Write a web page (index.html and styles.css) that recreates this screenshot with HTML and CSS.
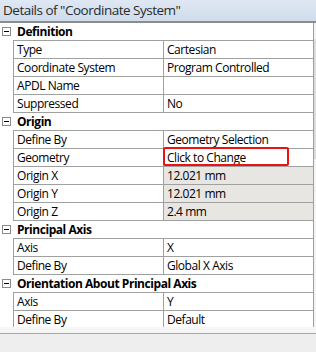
FILE: index.html
```html
<!DOCTYPE html>
<html>
<head>
  <title>Details of "Coordinate System"</title>
  <link rel="stylesheet" href="styles.css">
</head>
<body>
  <div class="panel">
    <div class="title">Details of "Coordinate System"</div>

    <div class="body">
      <div class="grid">
        <div class="group"><span class="toggle"></span><span class="group-label">Definition</span></div>
        <div class="prop"><span class="name">Type</span><span class="value">Cartesian</span></div>
        <div class="prop"><span class="name">Coordinate System</span><span class="value">Program Controlled</span></div>
        <div class="prop"><span class="name">APDL Name</span><span class="value"></span></div>
        <div class="prop"><span class="name">Suppressed</span><span class="value">No</span></div>

        <div class="group"><span class="toggle"></span><span class="group-label">Origin</span></div>
        <div class="prop"><span class="name">Define By</span><span class="value">Geometry Selection</span></div>
        <div class="prop"><span class="name">Geometry</span><span class="value">Click to Change</span></div>
        <div class="prop"><span class="name">Origin X</span><span class="value readonly">12.021 mm</span></div>
        <div class="prop"><span class="name">Origin Y</span><span class="value readonly">12.021 mm</span></div>
        <div class="prop"><span class="name">Origin Z</span><span class="value readonly">2.4 mm</span></div>

        <div class="group"><span class="toggle"></span><span class="group-label">Principal Axis</span></div>
        <div class="prop"><span class="name">Axis</span><span class="value">X</span></div>
        <div class="prop"><span class="name">Define By</span><span class="value">Global X Axis</span></div>

        <div class="group"><span class="toggle"></span><span class="group-label">Orientation About Principal Axis</span></div>
        <div class="prop"><span class="name">Axis</span><span class="value">Y</span></div>
        <div class="prop"><span class="name">Define By</span><span class="value">Default</span></div>
      </div>
      <div class="scroll"><div class="thumb"></div></div>
    </div>

    <div class="footer"></div>

    <!-- red marker around the geometry field -->
    <div class="highlight"></div>
  </div>
</body>
</html>
```

FILE: styles.css
```css
body {
  margin: 0;
  font-family: "Open Sans", "Noto Sans", sans-serif;
  font-size: 12px;
  letter-spacing: -0.45px;
  color: #000;
  background: #f0f0f0;
}

.panel {
  position: relative;
  width: 316px;
  height: 352px;
  display: flex;
  flex-direction: column;
  overflow: hidden;
}

.title {
  height: 21px;
  line-height: 21px;
  padding-left: 3px;
  font-size: 13.5px;
  letter-spacing: -0.5px;
  color: #2b2b2b;
  background: linear-gradient(#dfe8f3, #cfdcec);
  border-bottom: 2px solid #8c8c8c;
  white-space: nowrap;
}

.body {
  display: flex;
  height: 304px;
  overflow: hidden;
  background: #fff;
}

.grid {
  width: 314px;
}

.prop {
  display: flex;
  height: 18px;
  padding-left: 13px;
}

.name,
.value {
  box-sizing: border-box;
  height: 18px;
  line-height: 17px;
  padding-left: 3px;
  border-left: 1px solid #a0a0a0;
  border-bottom: 1px solid #a0a0a0;
  white-space: nowrap;
  overflow: hidden;
}

.name {
  width: 150px;
}

.value {
  width: 151px;
  border-right: 1px solid #a0a0a0;
}

.value.readonly {
  background: #e8e6e2;
}

.group {
  display: flex;
  height: 18px;
}

.toggle {
  position: relative;
  box-sizing: border-box;
  width: 9px;
  height: 9px;
  margin: 4px 2px 0 2px;
  border: 1px solid #8a8a8a;
  background: #fff;
}

.toggle::after {
  content: "";
  position: absolute;
  left: 1px;
  top: 3px;
  width: 5px;
  height: 1px;
  background: #000;
}

.group-label {
  box-sizing: border-box;
  width: 301px;
  height: 18px;
  line-height: 17px;
  padding-left: 4px;
  font-weight: bold;
  border-bottom: 1px solid #a0a0a0;
  border-right: 1px solid #a0a0a0;
  white-space: nowrap;
  overflow: hidden;
}

.scroll {
  width: 2px;
  background: #f4f4f4;
}

.thumb {
  margin-top: 16px;
  height: 120px;
  background: #dcdcdc;
}

.footer {
  flex: 1;
  border-top: 6px solid #f6f6f6;
  box-shadow: inset 0 1px 0 #a8a8a8;
  background: #eeeeee;
}

.highlight {
  position: absolute;
  left: 163px;
  top: 147px;
  width: 126px;
  height: 19px;
  box-sizing: border-box;
  border: 2px solid #ee1111;
  border-radius: 2px;
}
```
